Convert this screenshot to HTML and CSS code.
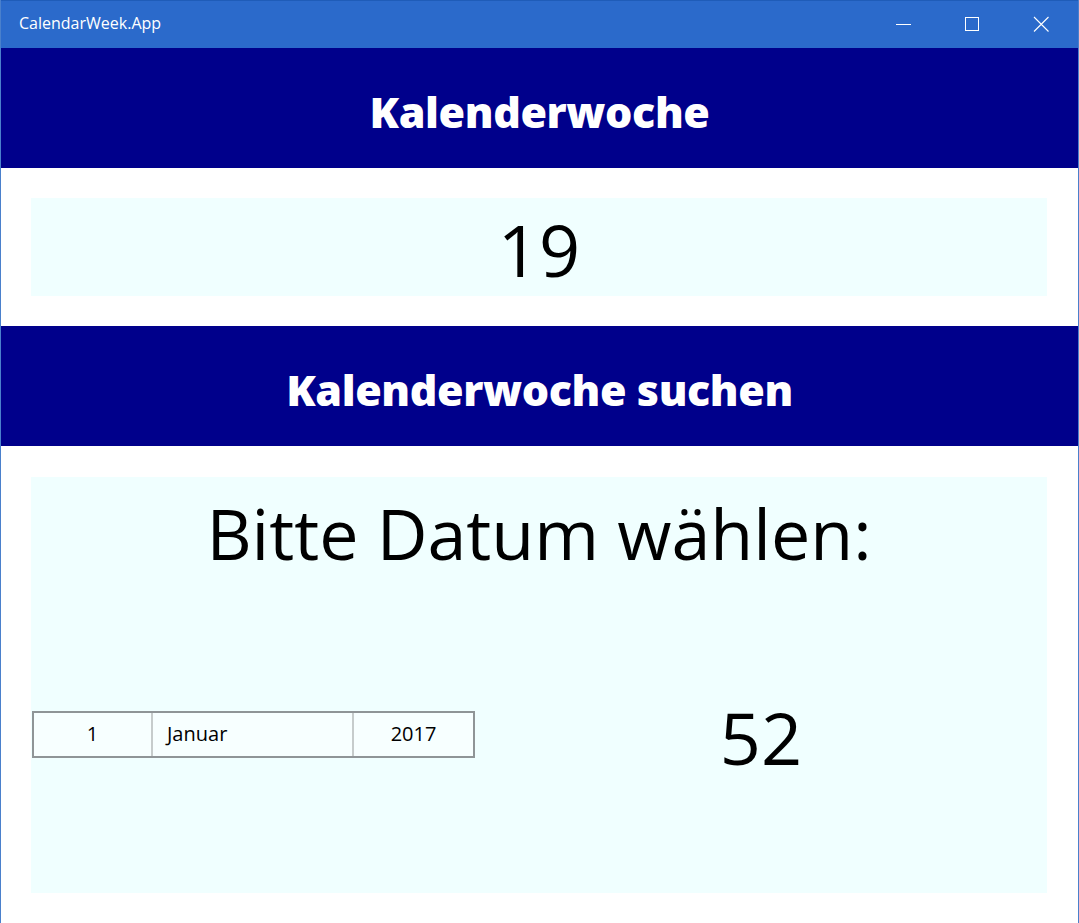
FILE: index.html
```html
<!DOCTYPE html>
<html lang="de">
<head>
  <meta charset="UTF-8" />
  <title>CalendarWeek.App</title>
  <link rel="stylesheet" href="styles.css">
</head>
<body>
  <div class="window">
    <div class="titlebar">
      <span class="app-title">CalendarWeek.App</span>
      <div class="controls">
        <span class="ctl">
          <svg width="16" height="16" viewBox="0 0 16 16"><line x1="1" y1="8.5" x2="16" y2="8.5" stroke="#fff" stroke-width="1"/></svg>
        </span>
        <span class="ctl">
          <svg width="16" height="16" viewBox="0 0 16 16"><rect x="1.5" y="1.5" width="13" height="13" fill="none" stroke="#fff" stroke-width="1"/></svg>
        </span>
        <span class="ctl">
          <svg width="16" height="16" viewBox="0 0 16 16"><path d="M1 1 L15.5 15.5 M15.5 1 L1 15.5" stroke="#fff" stroke-width="1.1"/></svg>
        </span>
      </div>
    </div>

    <header class="banner">
      <h1>Kalenderwoche</h1>
    </header>

    <section class="box current">
      <p class="week">19</p>
    </section>

    <header class="banner">
      <h1>Kalenderwoche suchen</h1>
    </header>

    <section class="box search">
      <h2>Bitte Datum wählen:</h2>
      <div class="picker-row">
        <div class="datepicker">
          <span class="seg day">1</span>
          <span class="seg month">Januar</span>
          <span class="seg year">2017</span>
        </div>
        <p class="result">52</p>
      </div>
    </section>
  </div>
</body>
</html>
```

FILE: styles.css
```css
:root {
  --navy: #00008b;
  --azure: #f0ffff;
  --titlebar: #2b6acb;
  --frame: #4a80cc;
}

* {
  box-sizing: border-box;
  margin: 0;
  padding: 0;
}

body {
  background: #fff;
  font-family: 'Open Sans', 'Noto Sans', sans-serif;
  color: #000;
}

.window {
  height: 923px;
  border-left: 1px solid var(--frame);
  border-right: 1px solid var(--frame);
  background: #fff;
}

.titlebar {
  height: 48px;
  background: var(--titlebar);
  border-top: 1px solid #1f5cb8;
  display: flex;
  align-items: center;
  justify-content: space-between;
  color: #fff;
}

.app-title {
  font-size: 16px;
  padding-left: 18px;
  padding-bottom: 3px;
}

.controls {
  display: flex;
  padding-bottom: 2px;
  padding-right: 3px;
}

.ctl {
  width: 69px;
  height: 46px;
  display: flex;
  align-items: center;
  justify-content: center;
}

.banner {
  background: var(--navy);
  height: 120px;
  display: flex;
  align-items: center;
  justify-content: center;
}

.banner h1 {
  color: #fff;
  font-size: 43px;
  font-weight: 800;
  letter-spacing: -0.4px;
  padding-top: 6px;
}

.box {
  background: var(--azure);
  margin: 30px 31px 30px 30px;
}

.current {
  height: 98px;
  display: flex;
  align-items: center;
  justify-content: center;
}

.week {
  font-size: 72px;
  padding-top: 4px;
}

.search {
  height: 416px;
  margin-top: 31px;
  margin-bottom: 0;
  display: flex;
  flex-direction: column;
}

.search h2 {
  font-weight: 400;
  font-size: 70px;
  text-align: center;
  line-height: 1;
  padding-top: 21px;
}

.picker-row {
  display: flex;
  align-items: center;
  margin-top: 114px;
}

.datepicker {
  display: flex;
  width: 443px;
  height: 47px;
  margin-left: 1px;
  border: 2px solid #8f9597;
  background: #f7ffff;
  font-size: 20px;
}

.seg {
  display: flex;
  align-items: center;
  padding-bottom: 2px;
}

.day {
  width: 119px;
  justify-content: center;
  border-right: 2px solid #c6cccc;
}

.month {
  width: 201px;
  padding-left: 14px;
  border-right: 2px solid #c6cccc;
}

.year {
  flex: 1;
  justify-content: center;
}

.result {
  flex: 1;
  text-align: center;
  font-size: 72px;
  padding-top: 6px;
}
```
